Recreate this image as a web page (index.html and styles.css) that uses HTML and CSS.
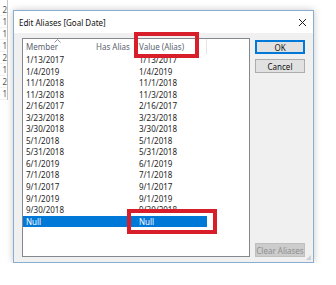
FILE: index.html
```html
<!DOCTYPE html>
<html lang="en">
  <head>
    <meta charset="UTF-8" />
    <meta name="viewport" content="width=device-width, initial-scale=1" />
    <title>Edit Aliases</title>
    <link rel="stylesheet" href="styles.css">
  </head>
  <body>
    <div class="desk">
      <div class="sheet">
        <div>2</div><div>1</div><div>1</div><div>1</div>
        <div>2</div><div>1</div><div>2</div><div>1</div>
      </div>

      <div class="dialog">
        <div class="titlebar">
          <span class="title">Edit Aliases [Goal Date]</span>
          <svg class="close" width="9" height="9" viewBox="0 0 9 9">
            <path d="M1 1 L8 8 M8 1 L1 8" stroke="#1a1a1a" stroke-width="1" fill="none" />
          </svg>
        </div>

        <div class="dialog-body">
          <div class="list">
            <div class="list-head">
              <div class="cell">Member
                <svg class="sort" width="7" height="4" viewBox="0 0 7 4">
                  <path d="M0.5 3.5 L3.5 0.5 L6.5 3.5" stroke="#8a8f99" stroke-width="1" fill="none" />
                </svg>
              </div>
              <div class="cell">Has Alias</div>
              <div class="cell divider">Value (Alias)</div>
              <div class="cell"></div>
            </div>
            <div class="rows" id="rows"></div>
          </div>

          <div class="buttons">
            <button class="btn default">OK</button>
            <button class="btn">Cancel</button>
            <button class="btn disabled">Clear Aliases</button>
          </div>
        </div>

        <div class="grip"></div>
      </div>
    </div>

    <div class="mark mark-head"></div>
    <div class="mark mark-null"></div>

    <script>
      const dates = [
        "1/13/2017", "1/4/2019", "11/1/2018", "11/3/2018", "2/16/2017",
        "3/23/2018", "3/30/2018", "5/1/2018", "5/31/2018", "6/1/2019",
        "7/1/2018", "9/1/2017", "9/1/2019", "9/30/2018", "Null"
      ];
      let html = "";
      for (let d of dates) {
        let cls = d === "Null" ? "row selected" : "row";
        html += `<div class="${cls}"><div class="cell">${d}</div><div class="cell"></div><div class="cell">${d}</div></div>`;
      }
      document.getElementById("rows").innerHTML = html;
    </script>
  </body>
</html>
```

FILE: styles.css
```css
body {
  margin: 0;
  background: #ffffff;
  font-family: "Noto Sans", "Open Sans", sans-serif;
  font-size: 8px;
  color: #1e1e1e;
}
.desk {
  display: flex;
  align-items: flex-start;
}
.sheet {
  width: 7px;
  border-right: 1px solid #c6c6c6;
  padding-top: 4px;
  text-align: right;
  color: #555;
}
.sheet div {
  height: 11px;
  line-height: 11px;
  border-bottom: 1px solid #f1f1f1;
  overflow: hidden;
}
.dialog {
  position: relative;
  width: 301px;
  height: 253px;
  box-sizing: border-box;
  margin: 10px 0 0 5px;
  border: 1px solid #8aaed2;
  box-shadow: 0 0 7px rgba(0, 0, 0, 0.22);
  display: flex;
  flex-direction: column;
}
.titlebar {
  height: 22px;
  background: #ffffff;
  display: flex;
  align-items: center;
  justify-content: space-between;
  padding: 0 6px 0 5px;
}
.title {
  font-size: 8px;
  color: #111;
}
.close {
  margin-top: 1px;
}
.dialog-body {
  flex: 1;
  background: #f0f0f0;
  display: flex;
  gap: 5px;
  padding: 5px 0 5px 8px;
}
.list {
  width: 228px;
  height: 219px;
  box-sizing: border-box;
  border: 1px solid #828790;
  background: #ffffff;
}
.list-head,
.row {
  display: grid;
  grid-template-columns: 69px 43px 72px 1fr;
}
.list-head {
  height: 15px;
  line-height: 15px;
  color: #5c6470;
}
.list-head .cell {
  position: relative;
  padding-left: 4px;
}
.list-head .cell:first-child {
  padding-left: 3px;
}
.list-head .divider {
  border-right: 1px solid #e5e5e5;
}
.sort {
  position: absolute;
  top: 0;
  left: 31px;
}
.row {
  height: 11.55px;
  line-height: 11.55px;
}
.row .cell {
  padding-left: 4px;
  white-space: nowrap;
}
.row .cell:first-child {
  padding-left: 3px;
}
.row.selected .cell {
  background: #0078d7;
  color: #ffffff;
}
.buttons {
  width: 50px;
  display: flex;
  flex-direction: column;
  gap: 5px;
  padding-top: 2px;
}
.btn {
  height: 14px;
  padding: 0;
  font-family: inherit;
  font-size: 8px;
  color: #111;
  background: #e1e1e1;
  border: 1px solid #adadad;
}
.btn.default {
  border: 1px solid #0078d7;
  box-shadow: inset 0 0 0 1px #0078d7;
}
.btn.disabled {
  margin-top: auto;
  background: #cccccc;
  border-color: #bfbfbf;
  color: #8f8f8f;
}
.grip {
  position: absolute;
  right: 2px;
  bottom: 2px;
  width: 5px;
  height: 5px;
  background: radial-gradient(circle, #a8a8a8 0.6px, transparent 0.8px) 0 0 / 2px 2px;
  clip-path: polygon(100% 0, 100% 100%, 0 100%);
}
.mark {
  position: absolute;
  box-sizing: border-box;
  border: 4px solid #d81e2a;
}
.mark-head {
  left: 134px;
  top: 32px;
  width: 65px;
  height: 26px;
}
.mark-null {
  left: 127px;
  top: 209px;
  width: 90px;
  height: 25px;
}
```
